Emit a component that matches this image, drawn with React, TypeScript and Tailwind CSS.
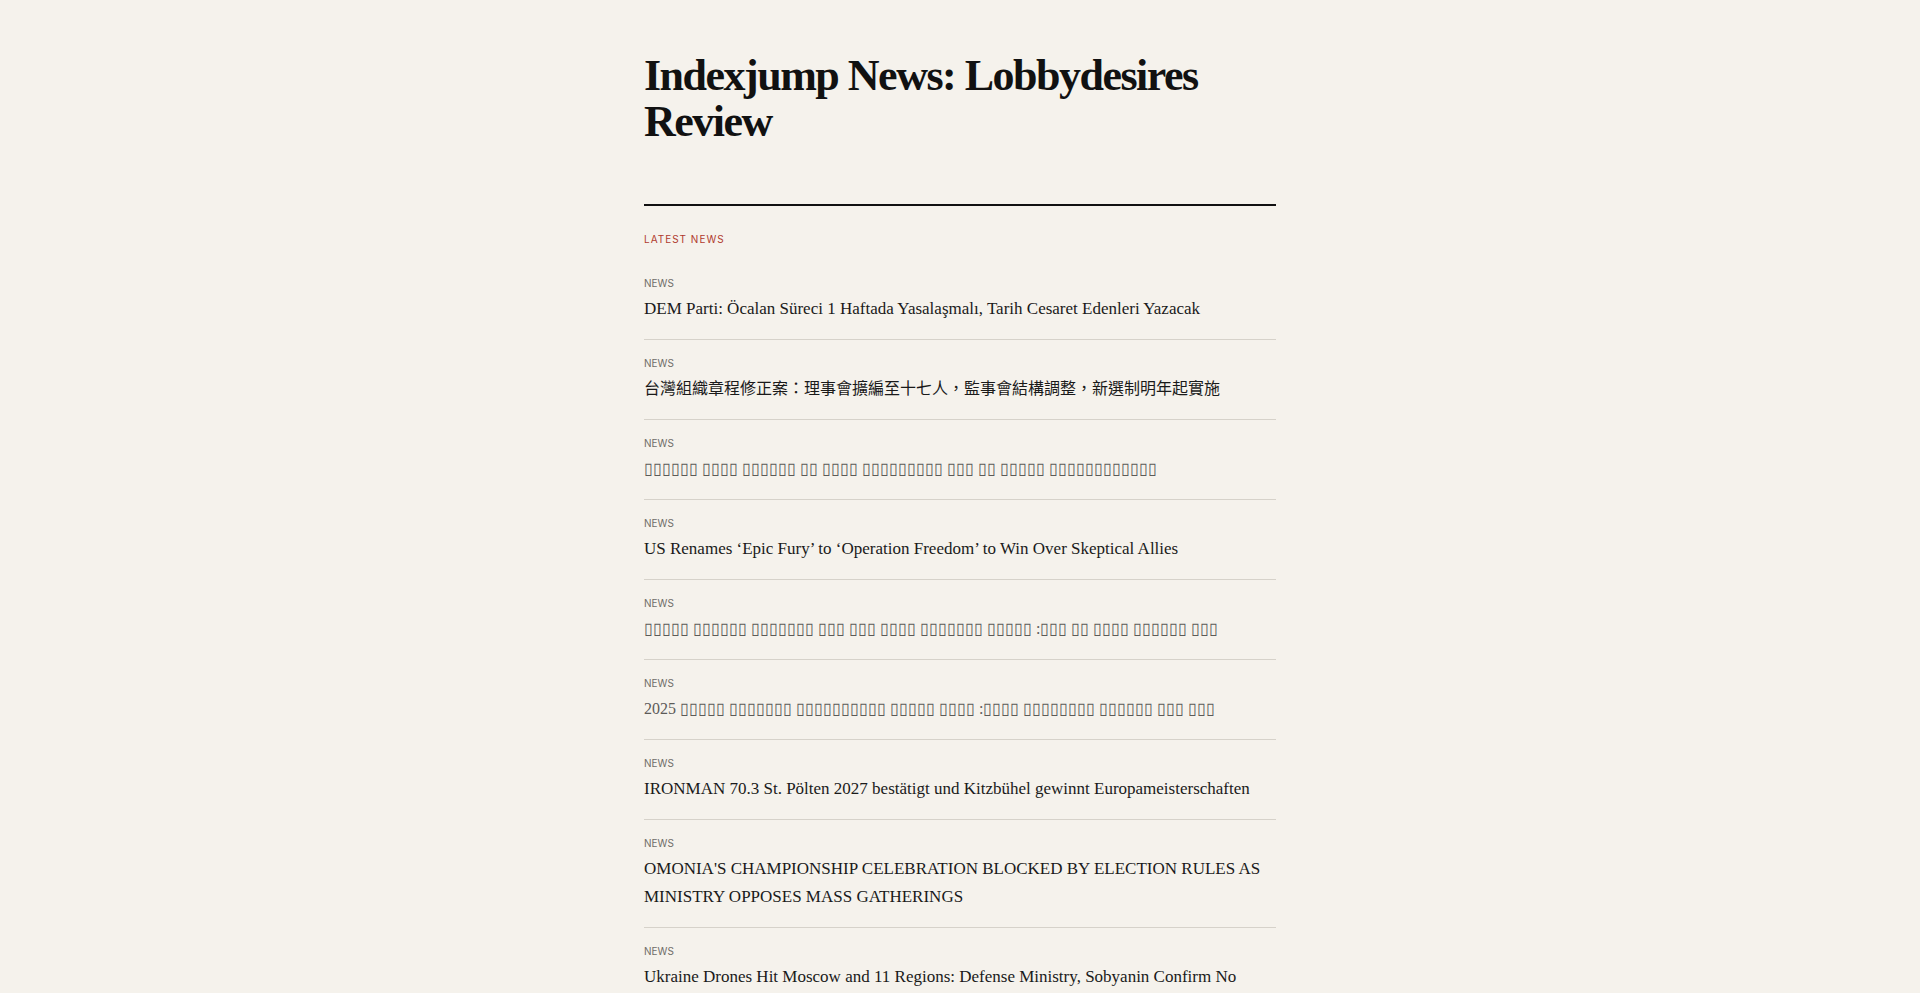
const BOX = '\u25AF';
const boxes = (...lens: number[]) => lens.map((n) => BOX.repeat(n)).join(' ');

type Item = { title: string; kind?: 'cjk' | 'missing' };

const items: Item[] = [
  { title: 'DEM Parti: Öcalan Süreci 1 Haftada Yasalaşmalı, Tarih Cesaret Edenleri Yazacak' },
  { title: '台灣組織章程修正案：理事會擴編至十七人，監事會結構調整，新選制明年起實施', kind: 'cjk' },
  { title: boxes(6, 4, 6, 2, 4, 9, 3, 2, 5, 12), kind: 'missing' },
  { title: 'US Renames ‘Epic Fury’ to ‘Operation Freedom’ to Win Over Skeptical Allies' },
  { title: `${boxes(5, 6, 7, 3, 3, 4, 7, 5)} :${boxes(3, 2, 4, 6, 3)}`, kind: 'missing' },
  { title: `2025 ${boxes(5, 7, 10, 5, 4)} :${boxes(4, 8, 6, 3, 3)}`, kind: 'missing' },
  { title: 'IRONMAN 70.3 St. Pölten 2027 bestätigt und Kitzbühel gewinnt Europameisterschaften' },
  { title: "OMONIA'S CHAMPIONSHIP CELEBRATION BLOCKED BY ELECTION RULES AS MINISTRY OPPOSES MASS GATHERINGS" },
  { title: 'Ukraine Drones Hit Moscow and 11 Regions: Defense Ministry, Sobyanin Confirm No Casualties' },
];

function NewsRow({ item }: { item: Item }) {
  const size =
    item.kind === 'cjk'
      ? 'text-base text-[#1a1a1a]'
      : item.kind === 'missing'
        ? 'text-[16px] text-[#5c5b58]'
        : 'text-[17px] text-[#1a1a1a]';
  return (
    <li className="border-b border-[#d6d2ca] pt-4 pb-4">
      <div className="font-['Inter',sans-serif] text-[10px] leading-[14px] uppercase text-[#6f6d68]">
        News
      </div>
      <a
        href="#"
        className={`mt-[5px] block font-['Liberation_Serif','Noto_Sans_CJK_TC',serif] leading-7 ${size}`}
      >
        {item.title}
      </a>
    </li>
  );
}

export default function App() {
  return (
    <div className="min-h-screen bg-[#f5f2ec] text-[#111]">
      <main className="mx-auto max-w-[672px] px-5 pt-[53px] pb-16">
        {/* Masthead */}
        <header className="border-b-2 border-[#111] pb-[59px]">
          <h1 className="font-['Liberation_Serif',serif] text-[44px] leading-[46px] font-bold tracking-[-1.5px]">
            Indexjump News: Lobbydesires Review
          </h1>
        </header>

        <section className="mt-[26px]">
          <h2 className="mb-[13px] font-['Inter',sans-serif] text-[10px] leading-[15px] uppercase tracking-widest text-[#b03a2e]">
            Latest News
          </h2>
          <ul>
            {items.map((item, i) => (
              <NewsRow key={i} item={item} />
            ))}
          </ul>
        </section>
      </main>
    </div>
  );
}
